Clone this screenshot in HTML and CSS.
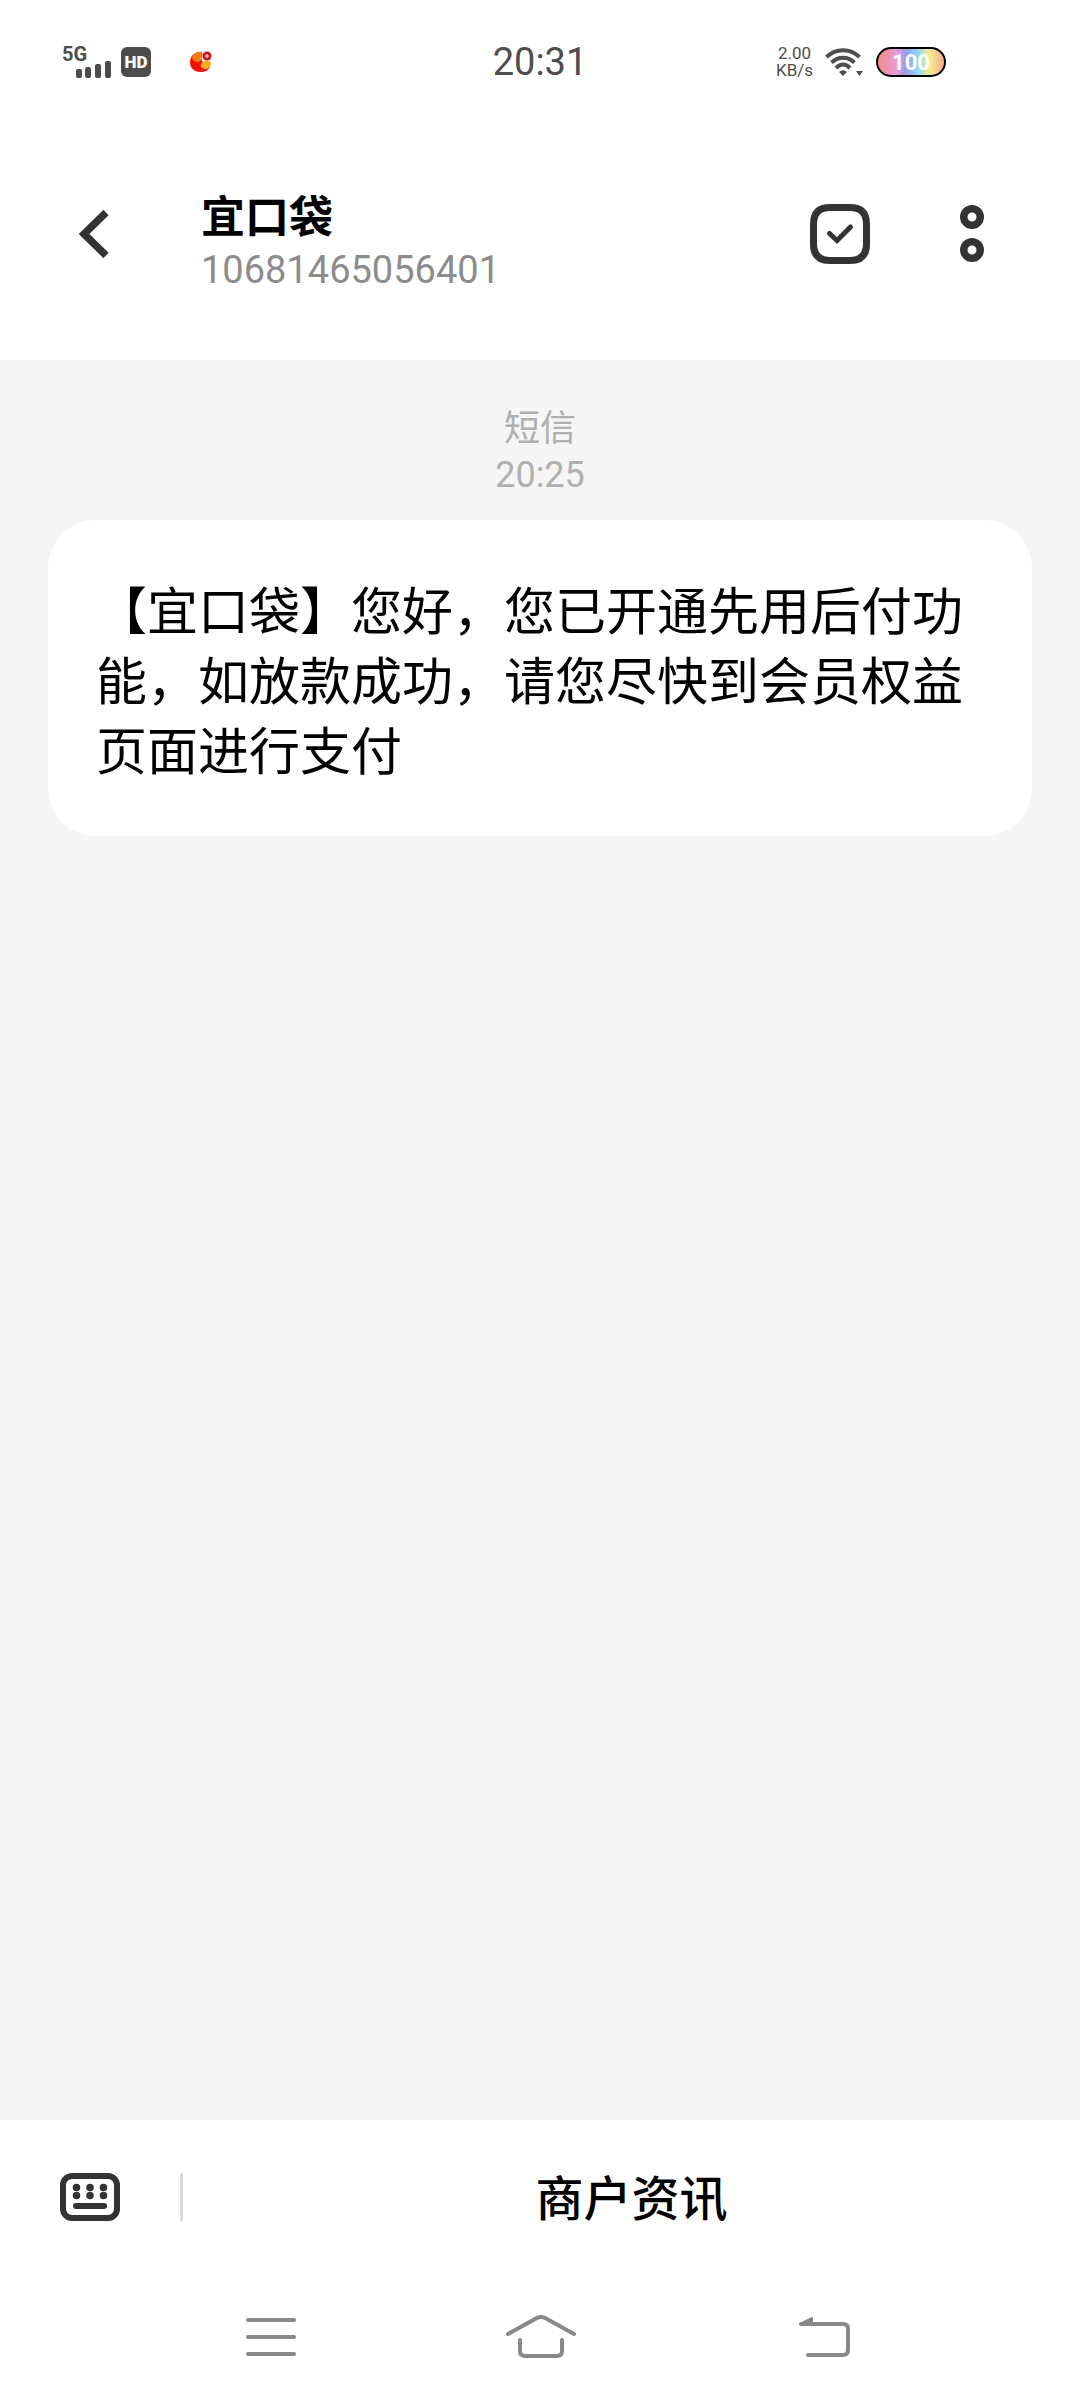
FILE: index.html
```html
<!DOCTYPE html>
<html lang="zh-CN">
<head>
<meta charset="utf-8">
<meta name="viewport" content="width=device-width, initial-scale=1">
<title>宜口袋</title>
<link rel="stylesheet" href="styles.css">
</head>
<body>
<div class="status">
  <div class="status-left">
    <svg class="signal" width="50" height="50" viewBox="0 -8 50 50" role="img" aria-label="5G">
      <text class="signal-label" x="0" y="16">5G</text>
      <g fill="#4d4d4d">
        <rect x="14" y="24" width="6" height="9" rx="2"/>
        <rect x="23" y="22" width="6" height="11" rx="2"/>
        <rect x="33" y="19" width="6" height="14" rx="2"/>
        <rect x="43" y="16" width="6" height="17" rx="2"/>
      </g>
    </svg>
    <span class="hd">HD</span>
    <svg class="app" width="22" height="22" viewBox="0 0 22 22" aria-hidden="true">
      <path d="M9 1C3 2 0 6 0 11.500C0 17 4.500 21 10.500 21C15 21 19 19 20 16L12 10Z" fill="#f21208"/>
      <path d="M2 7C3 2 8 0 12 1C13 4 12 9 9 11C6 11 3 10 2 7Z" fill="#f47a12"/>
      <path d="M11 13C13 9 20 9 21 12C21 16 18 19 14 18C12 17 10 15 11 13Z" fill="#fdab1c"/>
      <circle cx="17" cy="5" r="4.500" fill="#c9151e"/>
      <path d="M17 3V7M15 5H19" stroke="#ffb9a8" stroke-width="1.500"/>
    </svg>
  </div>
  <time class="clock">20:31</time>
  <div class="status-right">
    <div class="speed"><span>2.00</span><span>KB/s</span></div>
    <svg class="wifi" width="39" height="28" viewBox="0 0 39 28" aria-hidden="true">
      <g fill="none" stroke="#4d4d4d" stroke-width="4">
        <path d="M1.500 9C11 0 25 0 34.500 9"/>
        <path d="M6.500 14.500C13.500 8 22.500 8 29.500 14.500"/>
        <path d="M11 20C15.500 15.500 20.500 15.500 25 20"/>
      </g>
      <path d="M14 24Q18 20.500 22 24L18 28ZM31 23H38L34.500 28Z" fill="#4d4d4d"/>
    </svg>
    <span class="battery">100</span>
  </div>
</div>

<header class="header">
  <button class="icon-button" aria-label="返回">
    <svg width="30" height="48" viewBox="0 0 30 48"><path d="M27 2.500L5 24L27 45.500" fill="none" stroke="#333" stroke-width="7.500"/></svg>
  </button>
  <div class="contact">
    <h1 class="name">宜口袋</h1>
    <p class="number">10681465056401</p>
  </div>
  <button class="icon-button" aria-label="选择">
    <svg width="60" height="60" viewBox="0 0 60 60" fill="none" stroke="#333"><path d="M20 3.500H40Q56.500 3.500 56.500 20V40Q56.500 56.500 40 56.500H20Q3.500 56.500 3.500 40V20Q3.500 3.500 20 3.500Z" stroke-width="7"/><path d="M19.500 29.500L27 36.500L40.500 23" stroke-width="5" stroke-linecap="round"/></svg>
  </button>
  <button class="icon-button more" aria-label="更多">
    <svg width="24" height="58" viewBox="0 0 24 58" fill="none" stroke="#333" stroke-width="7.500"><circle cx="12" cy="12" r="8.250"/><circle cx="12" cy="45" r="8.250"/></svg>
  </button>
</header>

<main class="thread">
  <p class="stamp"><span>短信</span><time>20:25</time></p>
  <p class="bubble">【宜口袋】您好，您已开通先用后付功能，如放款成功，请您尽快到会员权益页面进行支付</p>
</main>

<footer class="actions">
  <button class="icon-button keyboard" aria-label="键盘">
    <svg width="60" height="48" viewBox="0 0 60 48"><rect x="3" y="3" width="54" height="42" rx="9" fill="none" stroke="#333" stroke-width="6"/><g fill="#333"><circle cx="16.500" cy="14.500" r="3.750"/><circle cx="30" cy="14.500" r="3.750"/><circle cx="43.500" cy="14.500" r="3.750"/><circle cx="16.500" cy="22.500" r="3.750"/><circle cx="30" cy="22.500" r="3.750"/><circle cx="43.500" cy="22.500" r="3.750"/><rect x="13" y="30" width="34" height="6" rx="3"/></g></svg>
  </button>
  <button class="merchant">商户资讯</button>
</footer>

<nav class="system-nav" aria-label="系统导航">
  <button class="icon-button" aria-label="最近任务">
    <svg width="70" height="44" viewBox="0 0 70 44" fill="none" stroke="#888" stroke-width="4" stroke-linecap="round"><path d="M12 5H58M12 22H58M12 39H58"/></svg>
  </button>
  <button class="icon-button" aria-label="主页">
    <svg width="70" height="44" viewBox="0 0 70 44" fill="none" stroke="#888" stroke-width="4" stroke-linecap="round"><path d="M2 19L29 4Q35 0 41 4L68 19M14 25V36Q14 41 19 41H51Q56 41 56 36V25"/></svg>
  </button>
  <button class="icon-button" aria-label="返回">
    <svg width="80" height="44" viewBox="0 0 80 44" fill="none" stroke="#888" stroke-width="4" stroke-linecap="round" stroke-linejoin="round"><path d="M30 9H72Q77 9 77 14V35Q77 40 72 40H37"/><path d="M29 9L41 3V9Z" fill="#888" stroke-width="2"/></svg>
  </button>
</nav>
</body>
</html>
```
FILE: styles.css
```css
* {
  box-sizing: border-box;
}

body {
  margin: 0;
  min-height: 100vh;
  display: flex;
  flex-direction: column;
  background: #fff;
  color: #000;
  font-family: Roboto, "Noto Sans CJK SC", sans-serif;
}

h1,
p {
  margin: 0;
}

button {
  padding: 0;
  border: 0;
  background: none;
  color: inherit;
  font: inherit;
}

svg {
  display: block;
}

.icon-button {
  display: grid;
  place-items: center;
}

/* Status bar */
.status {
  height: 124px;
  padding: 0 134px 0 62px;
  display: flex;
  align-items: center;
  color: #4d4d4d;
}

.status-left,
.status-right {
  flex: 1;
  display: flex;
  align-items: center;
}

.signal-label {
  font: 700 20px Roboto, sans-serif;
  fill: #4d4d4d;
}

.hd {
  width: 30px;
  height: 30px;
  margin-left: 9px;
  border-radius: 6px;
  background: #4d4d4d;
  color: #fff;
  font-size: 17px;
  font-weight: 900;
  line-height: 30px;
  text-align: center;
}

.app {
  margin-left: 39px;
}

.clock {
  margin-left: 72px;
  font-size: 38px;
  line-height: 44px;
}

.status-right {
  justify-content: flex-end;
}

.speed {
  display: flex;
  flex-direction: column;
  font-size: 17px;
  line-height: 17px;
  text-align: center;
}

.wifi {
  margin-left: 12px;
}

.battery {
  width: 70px;
  height: 30px;
  margin-left: 12px;
  border: 2px solid #000;
  border-radius: 15px;
  background: linear-gradient(90deg, #f08f8f 4%, #e79bd8 28%, #9b9be8 42%, #8fd8f5 60%, #f5ee8f 78%, #f7b58f 96%);
  color: #fff;
  font-size: 22px;
  font-weight: 700;
  line-height: 27px;
  text-align: center;
}

/* Conversation header */
.header {
  height: 236px;
  padding: 0 96px 16px 79px;
  display: flex;
  align-items: center;
}

.contact {
  flex: 1;
  margin-left: 92px;
  padding-top: 16px;
}

.name {
  font-size: 44px;
  font-weight: 700;
  line-height: 56px;
}

.number {
  color: #8c8c8c;
  font-size: 38px;
  line-height: 48px;
}

.more {
  margin-left: 90px;
}

/* Messages */
.thread {
  flex: 1;
  padding: 46px 48px;
  background: #f5f5f5;
}

.stamp {
  display: flex;
  flex-direction: column;
  color: #b0b0b0;
  font-size: 36px;
  line-height: 46px;
  text-align: center;
}

.bubble {
  margin-top: 22px;
  padding: 58px 48px 48px;
  border-radius: 48px;
  background: #fff;
  font-size: 51px;
  line-height: 70px;
}

/* Quick actions */
.actions {
  height: 154px;
  padding-left: 60px;
  display: flex;
  align-items: center;
}

.keyboard {
  height: 48px;
  padding-right: 60px;
  border-right: 3px solid #ddd;
}

.merchant {
  flex: 1;
  padding-top: 6px;
  font-size: 48px;
  font-weight: 500;
  line-height: 72px;
}

.system-nav {
  height: 126px;
  padding: 0 134px 0 136px;
  display: grid;
  grid-template-columns: repeat(3, 1fr);
}
```
